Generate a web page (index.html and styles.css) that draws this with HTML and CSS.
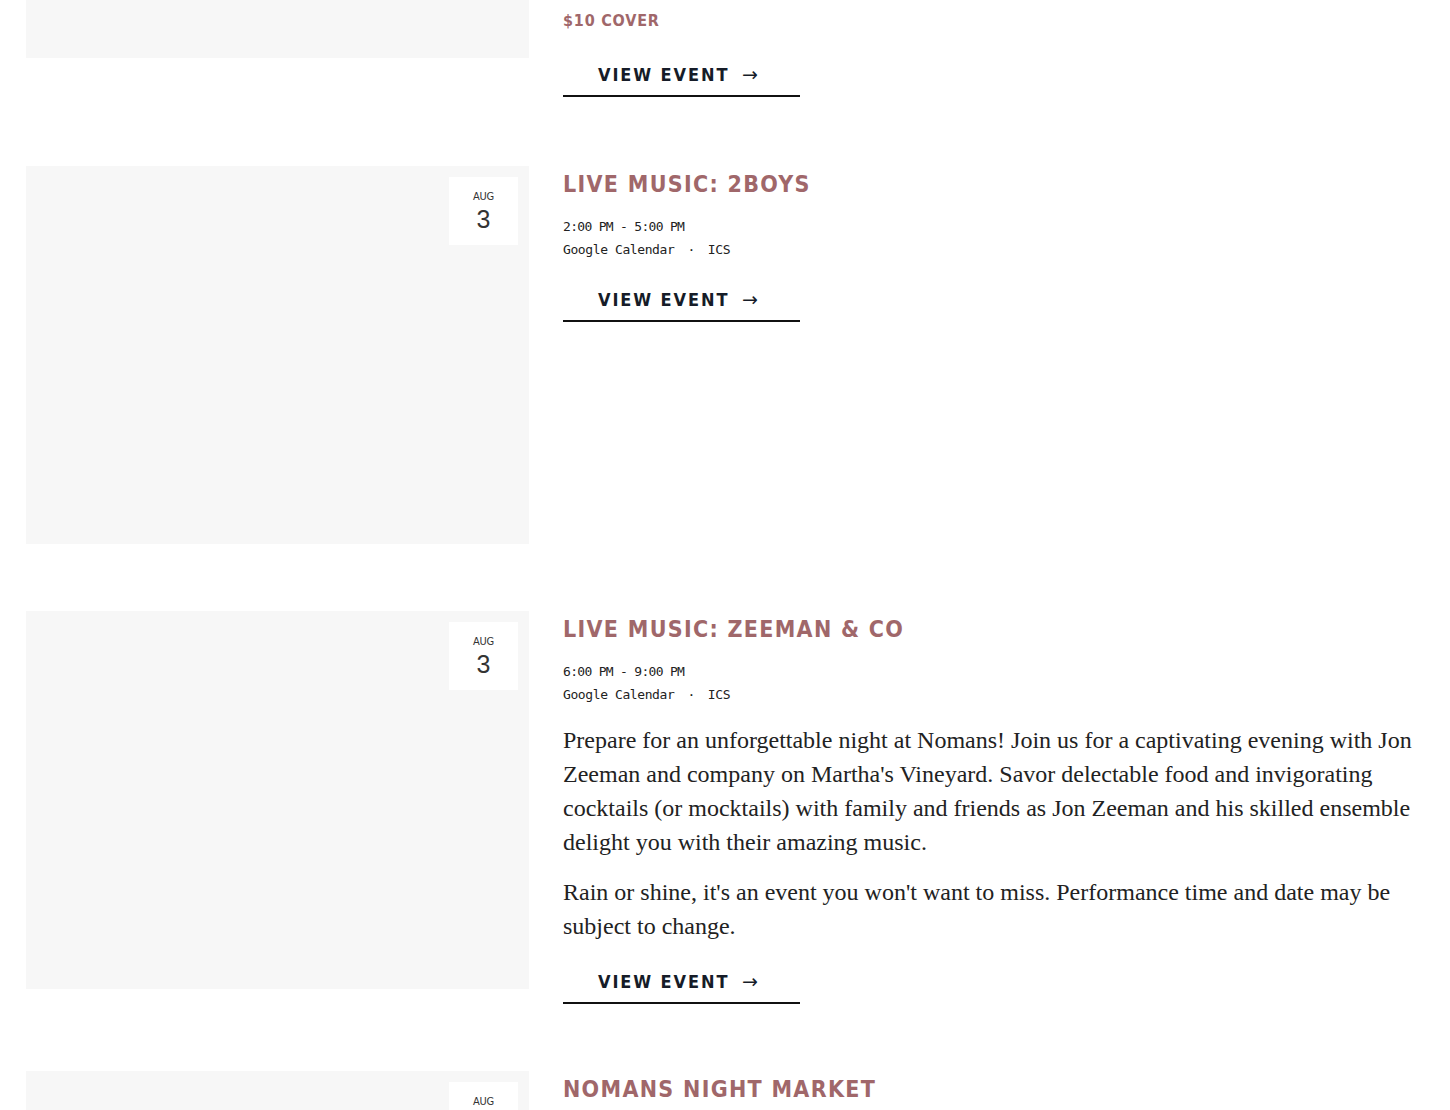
FILE: index.html
```html
<!DOCTYPE html>
<html lang="en">
<head>
<meta charset="utf-8">
<title>Events</title>
<link rel="stylesheet" href="styles.css">
</head>
<body>
<div class="list">
  <article class="event event-cut">
    <div class="thumb thumb-cut"></div>
    <div class="info info-cut">
      <div class="cover">$10 Cover</div>
      <a class="view" href="#">View Event <span class="arrow">→</span></a>
    </div>
  </article>

  <article class="event">
    <div class="thumb">
      <div class="badge"><span class="mon">Aug</span><span class="day">3</span></div>
    </div>
    <div class="info">
      <h2 class="title">Live Music: 2Boys</h2>
      <div class="meta time">2:00 PM - 5:00 PM</div>
      <div class="meta">Google Calendar<span class="dot">·</span>ICS</div>
      <a class="view" href="#">View Event <span class="arrow">→</span></a>
    </div>
  </article>

  <article class="event">
    <div class="thumb">
      <div class="badge"><span class="mon">Aug</span><span class="day">3</span></div>
    </div>
    <div class="info">
      <h2 class="title">Live Music: Zeeman &amp; Co</h2>
      <div class="meta time">6:00 PM - 9:00 PM</div>
      <div class="meta">Google Calendar<span class="dot">·</span>ICS</div>
      <div class="desc">
        <p>Prepare for an unforgettable night at Nomans! Join us for a captivating evening with Jon Zeeman and company on Martha's Vineyard. Savor delectable food and invigorating cocktails (or mocktails) with family and friends as Jon Zeeman and his skilled ensemble delight you with their amazing music.</p>
        <p>Rain or shine, it's an event you won't want to miss. Performance time and date may be subject to change.</p>
      </div>
      <a class="view" href="#">View Event <span class="arrow">→</span></a>
    </div>
  </article>

  <article class="event">
    <div class="thumb">
      <div class="badge"><span class="mon">Aug</span><span class="day">3</span></div>
    </div>
    <div class="info">
      <h2 class="title">Nomans Night Market</h2>
    </div>
  </article>
</div>
</body>
</html>
```

FILE: styles.css
```css
html, body {
  margin: 0;
  padding: 0;
  background: #ffffff;
}

body {
  font-family: "Liberation Serif", "Times New Roman", serif;
  color: #222222;
  overflow: hidden;
  height: 1110px;
}

.list {
  padding: 0 26px;
  display: flex;
  flex-direction: column;
}

.event {
  display: flex;
  align-items: flex-start;
  gap: 34px;
  margin-bottom: 67px;
}

.event-cut {
  margin-bottom: 69px;
}

.thumb {
  position: relative;
  flex: 0 0 503px;
  height: 378px;
  background: #f7f7f7;
}

.thumb-cut {
  height: 58px;
}

.badge {
  position: absolute;
  top: 11px;
  right: 11px;
  width: 69px;
  height: 68px;
  background: #ffffff;
  display: flex;
  flex-direction: column;
  align-items: center;
  color: #333333;
}

.mon {
  margin-top: 13px;
  font-family: "DejaVu Sans Condensed", "DejaVu Sans", sans-serif;
  font-size: 11px;
  line-height: 14px;
  text-transform: uppercase;
  letter-spacing: -0.3px;
}

.day {
  margin-top: 1px;
  font-family: "Liberation Sans", Arial, sans-serif;
  font-size: 25px;
  line-height: 28px;
  color: #333333;
}

.info {
  flex: 1 1 auto;
  display: flex;
  flex-direction: column;
  align-items: flex-start;
  min-width: 0;
}

.info-cut {
  padding-top: 10px;
}

.title {
  margin: 0 0 14px;
  padding-top: 1px;
  font-family: "DejaVu Sans Condensed", "DejaVu Sans", sans-serif;
  font-weight: bold;
  font-size: 23px;
  line-height: 34px;
  letter-spacing: 1.3px;
  text-transform: uppercase;
  color: #a0676a;
}

.cover {
  font-family: "DejaVu Sans Condensed", "DejaVu Sans", sans-serif;
  font-weight: bold;
  font-size: 16px;
  line-height: 22px;
  letter-spacing: 0.8px;
  text-transform: uppercase;
  color: #a0676a;
}

.meta {
  font-family: "DejaVu Sans Mono", monospace;
  font-size: 13px;
  line-height: 23px;
  letter-spacing: -0.4px;
  color: #222222;
}

.time {
  letter-spacing: -0.7px;
}

.dot {
  margin: 0 13px;
}

.desc {
  margin-top: 17px;
  font-size: 24px;
  line-height: 34px;
  color: #222222;
}

.desc p {
  margin: 0;
}

.desc p + p {
  margin-top: 16px;
}

.view {
  margin-top: 27px;
  padding: 0 42px 8px 35px;
  border-bottom: 2px solid #111111;
  font-family: "DejaVu Sans Condensed", "DejaVu Sans", sans-serif;
  font-weight: bold;
  font-size: 18px;
  line-height: 24px;
  letter-spacing: 1.9px;
  text-transform: uppercase;
  color: #161c28;
  text-decoration: none;
}

.info-cut .view {
  margin-top: 31px;
}

.arrow {
  font-family: "DejaVu Sans", sans-serif;
  font-weight: normal;
  font-size: 19px;
  line-height: 0;
  letter-spacing: 0;
  margin-left: 5px;
}
```
